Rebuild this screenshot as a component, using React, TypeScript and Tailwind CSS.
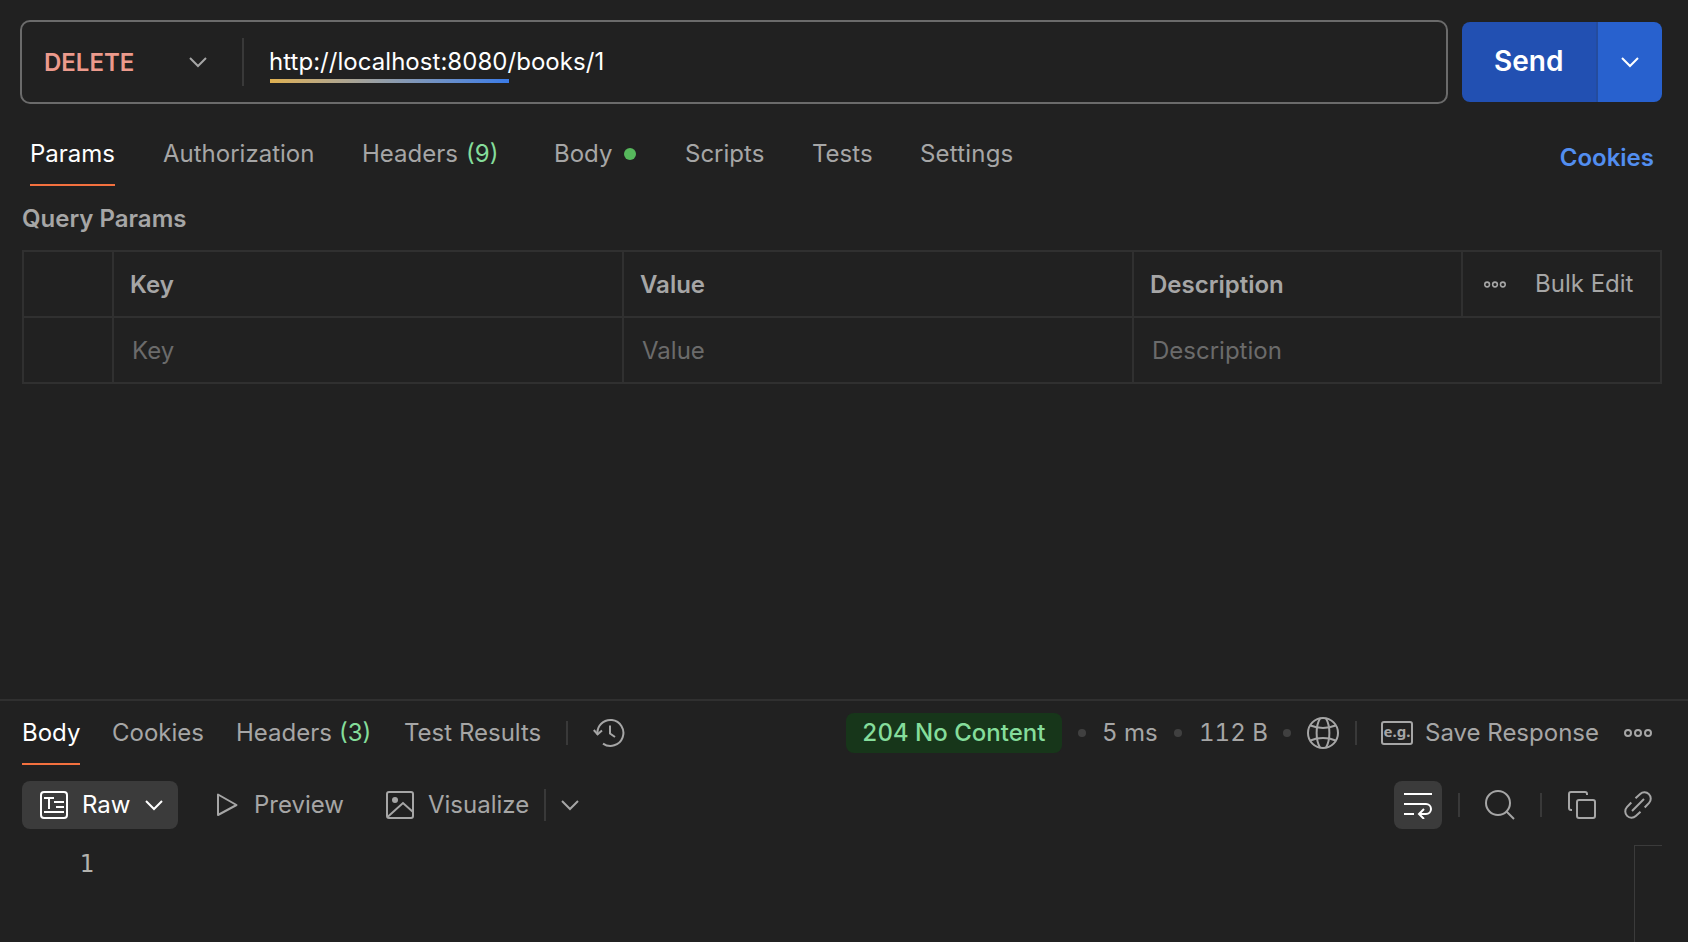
import type { ReactNode } from "react";

const Chevron = ({ className = "" }: { className?: string }) => (
  <svg className={className} width="18" height="12" viewBox="0 0 18 12" fill="none" stroke="currentColor" strokeWidth="2">
    <path d="M1 2L9 10L17 2" />
  </svg>
);

const Dots = ({ className = "", width, height }: { className?: string; width: number; height: number }) => (
  <svg className={className} width={width} height={height} viewBox="0 0 28 8" fill="none" stroke="currentColor" strokeWidth="2">
    <circle cx="4" cy="4" r="3" />
    <circle cx="14" cy="4" r="3" />
    <circle cx="24" cy="4" r="3" />
  </svg>
);

const Tab = ({ children, active, width }: { children: ReactNode; active?: boolean; width: string }) => (
  <div className={`relative h-full flex items-center whitespace-nowrap shrink-0 ${width} ${active ? "text-white" : ""}`}>
    {children}
    {active && <span className="absolute left-0 right-0 bottom-0 h-0.5 bg-[#f4713f]" />}
  </div>
);

const Sep = ({ className = "" }: { className?: string }) => <span className={`w-0.5 shrink-0 bg-[#393939] ${className}`} />;

function UrlBar() {
  return (
    <div className="flex items-center pl-5 pt-5">
      <div className="flex h-[84px] w-[1428px] items-center rounded-[10px] border-2 border-[#6b6b6b]">
        <span className="ml-[22px] w-[145px] pt-0.5 font-semibold text-[#ec9a8c]">DELETE</span>
        <Chevron className="text-[#a6a6a6]" />
        <Sep className="ml-[35px] h-12" />
        <div className="relative ml-[25px] tracking-[0.04px] text-white">
          http://localhost:8080/books/1
          <span className="absolute left-px top-[33px] h-1 w-[239px] bg-linear-to-r from-[#dfb04f] to-[#3a7be8]" />
        </div>
      </div>
      <div className="ml-3.5 flex h-20 w-[200px] overflow-hidden rounded-lg text-white">
        <div className="w-[134px] bg-[#2250b2] pl-8 text-[28px] leading-[79px] font-semibold">Send</div>
        <div className="flex flex-1 items-center justify-center border-l-2 border-[#244c9e] bg-[#2861ce]">
          <Chevron />
        </div>
      </div>
    </div>
  );
}

function RequestTabs() {
  return (
    <div className="flex h-[82px] pl-[30px] pr-[34px]">
      <div className="flex h-[82px] flex-1 pt-[18px]">
        <Tab active width="w-[85px] mr-12">Params</Tab>
        <Tab width="w-[199px]">Authorization</Tab>
        <Tab width="w-[192px]"><span className="w-[104px]">Headers</span><span className="text-[#85dd9b]">(9)</span></Tab>
        <Tab width="w-[131px]">Body<span className="ml-3 size-3 rounded-full bg-[#56b85c]" /></Tab>
        <Tab width="w-[127px]">Scripts</Tab>
        <Tab width="w-[108px]">Tests</Tab>
        <Tab width="w-[96px] tracking-[0.2px]">Settings</Tab>
      </div>
      <span className="pt-[38px] font-semibold text-[#528ef0]">Cookies</span>
    </div>
  );
}

function ParamsTable() {
  const cell = "flex items-center border-r-2 border-[#303030]";
  return (
    <div className="ml-[22px] w-[1640px] border-2 border-[#303030]">
      <div className="flex h-16 font-semibold">
        <div className={`${cell} w-[90px]`} />
        <div className={`${cell} w-[510px] pl-4 pt-0.5`}>Key</div>
        <div className={`${cell} w-[510px] pl-4 pt-0.5`}>Value</div>
        <div className={`${cell} w-[329px] pl-4 pt-0.5`}>Description</div>
        <div className="flex flex-1 items-center font-normal">
          <Dots className="ml-[21px] w-[22px]" width={22} height={7} />
          <span className="ml-[29px]">Bulk Edit</span>
        </div>
      </div>
      <div className="flex h-[66px] border-t-2 border-[#303030] text-[#6b6b6b]">
        <div className={`${cell} w-[90px]`} />
        <div className={`${cell} w-[510px] pl-[18px] pt-0.5`}>Key</div>
        <div className={`${cell} w-[510px] pl-[18px] pt-0.5`}>Value</div>
        <div className="flex items-center pl-[18px] pt-0.5">Description</div>
      </div>
    </div>
  );
}

const StatusDot = () => <span className="size-2 shrink-0 rounded-full bg-[#404040]" />;

function ResponseTabs() {
  return (
    <div className="flex h-[66px] items-center border-t-2 border-[#303030] pl-[22px] whitespace-nowrap">
      <div className="flex h-full w-[824px] items-center">
        <Tab active width="w-[58px] mr-8">Body</Tab>
        <Tab width="w-[124px]">Cookies</Tab>
        <Tab width="w-[168px]"><span className="w-[103px]">Headers</span><span className="text-[#85dd9b]">(3)</span></Tab>
        <Tab width="w-[162px]">Test Results</Tab>
        <Sep className="h-6" />
        <svg className="ml-[25px]" width="32" height="32" viewBox="0 0 32 32" fill="none" stroke="currentColor" strokeWidth="2">
          <path d="M4.5 17.5A13 13 0 1 1 10 26.6" />
          <path d="M0.8 13L4.6 17.3L9 13.6" />
          <path d="M17 8.5V16.5L22 20" />
        </svg>
      </div>
      <span className="h-10 w-[216px] rounded-lg bg-[#17361a] pl-4 font-medium leading-10 tabular-nums text-[#85dd9b]">204 No Content</span>
      <span className="w-4" /><StatusDot />
      <span className="w-[88px] pl-4 tabular-nums">5 ms</span><StatusDot />
      <span className="w-[101px] pl-[17px] tabular-nums">112 B</span><StatusDot />
      <svg className="ml-4" width="32" height="32" viewBox="0 0 32 32" fill="none" stroke="currentColor" strokeWidth="2">
        <circle cx="16" cy="16" r="15" />
        <path d="M13 1.5C8.5 9 8.5 23 13 30.5M19 1.5C23.5 9 23.5 23 19 30.5" />
        <path d="M3.5 8.5C11 11.7 21 11.7 28.5 8.5M3.5 23.5C11 20.3 21 20.3 28.5 23.5" />
      </svg>
      <Sep className="ml-4 h-6" />
      <span className="ml-6 flex h-6 w-8 justify-center rounded-[3px] border-2 border-current font-['Noto_Sans',sans-serif] text-[15px] leading-[17px] font-bold">e.g.</span>
      <span className="w-[211px] pl-3">Save Response</span>
      <Dots width={28} height={8} />
    </div>
  );
}

function ResponseToolbar() {
  return (
    <div className="mt-4 flex h-12 items-center pl-[22px] whitespace-nowrap">
      <div className="flex h-12 w-[156px] items-center rounded-lg bg-[#3b3b3b] pl-[18px] text-white">
        <svg width="28" height="28" viewBox="0 0 28 28" fill="none" stroke="currentColor" strokeWidth="2">
          <rect x="1" y="1" width="26" height="26" rx="3" />
          <path d="M4 7H14M9 7V18M14 11H24M16 16H24M4 21H24" />
        </svg>
        <span className="ml-3.5 w-[63px]">Raw</span>
        <Chevron />
      </div>
      <svg className="ml-[38px]" width="22" height="24" viewBox="0 0 22 24" fill="none" stroke="currentColor" strokeWidth="2" strokeLinejoin="round">
        <path d="M2 1.5V22L20.5 12Z" />
      </svg>
      <span className="ml-4 w-[132px]">Preview</span>
      <svg width="28" height="28" viewBox="0 0 28 28" fill="none" stroke="currentColor" strokeWidth="2">
        <rect x="1" y="1" width="26" height="26" rx="2" />
        <circle cx="9" cy="9" r="3" fill="currentColor" stroke="none" />
        <path d="M1.5 26L17 12L27 21" />
      </svg>
      <span className="ml-3.5 w-[116px]">Visualize</span>
      <Sep className="h-8" />
      <Chevron className="ml-[15px]" />
      <div className="ml-[815px] flex size-12 items-center justify-center rounded-lg bg-[#3b3b3b] text-white">
        <svg width="28" height="28" viewBox="0 0 28 28" fill="none" stroke="currentColor" strokeWidth="2">
          <path d="M0 3H28M0 13H22A5 5 0 0 1 22 23H15M0 23H10" />
          <path d="M20 18L15 23L20 28" />
        </svg>
      </div>
      <Sep className="ml-4 h-6" />
      <svg className="ml-[25px]" width="30" height="30" viewBox="0 0 30 30" fill="none" stroke="currentColor" strokeWidth="2">
        <circle cx="13" cy="13" r="12" />
        <path d="M21.5 21.5L29 29" />
      </svg>
      <Sep className="ml-[25px] h-6" />
      <svg className="ml-[26px]" width="28" height="28" viewBox="0 0 28 28" fill="none" stroke="currentColor" strokeWidth="2">
        <rect x="9" y="9" width="18" height="18" rx="2" />
        <path d="M19 4V3A2 2 0 0 0 17 1H3A2 2 0 0 0 1 3V17A2 2 0 0 0 3 19H4" />
      </svg>
      <svg className="ml-7" width="28" height="28" viewBox="0 0 28 28" fill="none" stroke="currentColor" strokeWidth="2">
        <path d="M8 20L20 8" />
        <path d="M11.5 7.3L16.2 2.9A6.3 6.3 0 0 1 25.1 11.8L20.7 16.5" />
        <path d="M16.5 20.7L11.8 25.1A6.3 6.3 0 0 1 2.9 16.2L7.3 11.5" />
      </svg>
    </div>
  );
}

export default function App() {
  return (
    <div className="flex h-[942px] w-[1688px] flex-col overflow-hidden bg-[#212121] font-['Inter',sans-serif] text-[24px] leading-8 text-[#a6a6a6]">
      <UrlBar />
      <RequestTabs />
      <h2 className="h-16 pl-[22px] pt-[17px] font-semibold">Query Params</h2>
      <ParamsTable />
      <div className="h-[315px]" />
      <ResponseTabs />
      <ResponseToolbar />
      <div className="mt-4 flex flex-1 justify-between pr-[26px]">
        <span className="pl-[79.5px] pt-[3px] font-['DejaVu_Sans_Mono',monospace] text-[#b3b2ae]">1</span>
        <span className="w-7 border-t border-l border-[#3b3b3b]" />
      </div>
    </div>
  );
}
